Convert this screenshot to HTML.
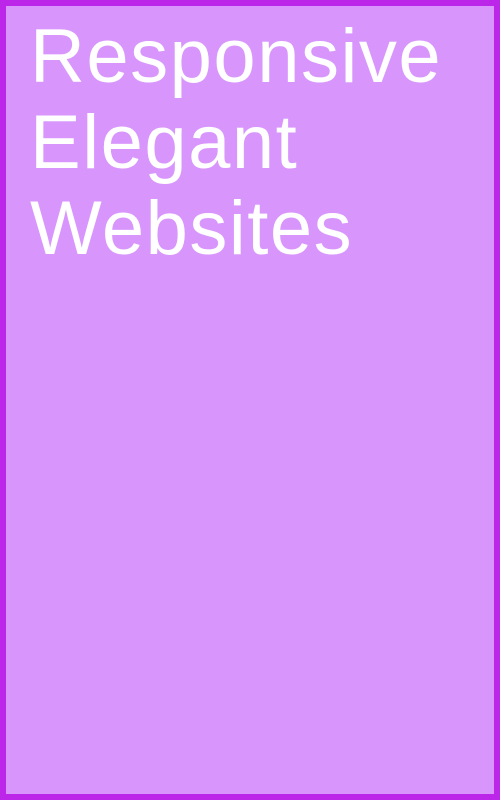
<!DOCTYPE html>
<html><head><style>
html,body{margin:0;padding:0}
body{width:500px;height:800px;box-sizing:border-box;border:6px solid #bc26e9;background:#d896fd;overflow:hidden;position:relative}
h1{position:absolute;left:24px;top:8px;margin:0;font-family:"Liberation Sans",sans-serif;font-weight:normal;color:#fff;font-size:76px;line-height:86px;letter-spacing:1.5px}
</style></head><body>
<h1>Responsive<br>Elegant<br>Websites</h1>
</body></html>
